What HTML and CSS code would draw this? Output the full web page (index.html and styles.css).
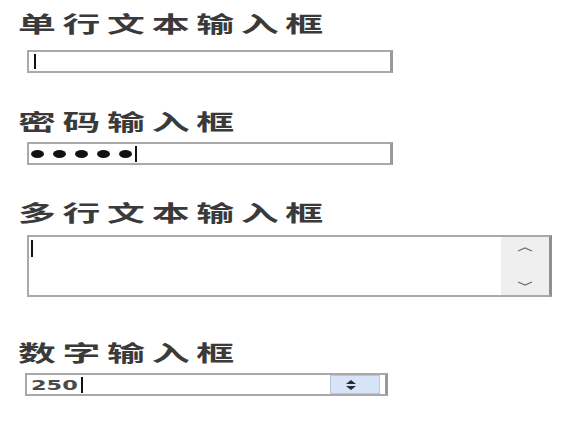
FILE: index.html
```html
<!DOCTYPE html>
<html lang="zh">
<head>
<meta charset="utf-8">
<title>输入框</title>
<link rel="stylesheet" href="styles.css">
</head>
<body>
<main class="page">
  <section class="field field-first">
    <h2 class="label"><span class="stretch">单行文本输入框</span></h2>
    <div class="box single gap-a"><span class="caret caret-single"></span></div>
  </section>

  <section class="field field-second">
    <h2 class="label"><span class="stretch">密码输入框</span></h2>
    <div class="box single password gap-b">
      <span class="dot"></span><span class="dot"></span><span class="dot"></span><span class="dot"></span><span class="dot"></span>
      <span class="caret caret-pass"></span>
    </div>
  </section>

  <section class="field field-third">
    <h2 class="label"><span class="stretch">多行文本输入框</span></h2>
    <div class="box area gap-c">
      <div class="area-text"><span class="caret caret-area"></span></div>
      <div class="scrollbar">
        <svg class="chev" width="22" height="8" viewBox="0 0 22 8"><polyline points="4,6 11,3 18,6" fill="none" stroke="#6f6f6f" stroke-width="1.3"/></svg>
        <svg class="chev" width="22" height="8" viewBox="0 0 22 8"><polyline points="4,2 11,5 18,2" fill="none" stroke="#6f6f6f" stroke-width="1.3"/></svg>
      </div>
    </div>
  </section>

  <section class="field field-fourth">
    <h2 class="label"><span class="stretch">数字输入框</span></h2>
    <div class="box number gap-b">
      <div class="num-text"><span class="num-value">250</span><span class="caret caret-num"></span></div>
      <div class="spin">
        <svg width="12" height="10" viewBox="0 0 12 10"><polygon points="6,0 11,4 1,4" fill="#2b2b2b"/><polygon points="1,6 11,6 6,10" fill="#2b2b2b"/></svg>
      </div>
    </div>
  </section>
</main>
</body>
</html>
```

FILE: styles.css
```css
body {
  margin: 0;
  background: #ffffff;
  font-family: "Noto Sans CJK SC", "Noto Sans", sans-serif;
}

.page {
  padding: 11px 0 0 18px;
}

.field-second { margin-top: 36px; }
.field-third { margin-top: 35px; }
.field-fourth { margin-top: 43px; }

.label {
  margin: 0;
  height: 22px;
  font-size: 22px;
  line-height: 22px;
  font-weight: 700;
  color: #3a3a3a;
  white-space: nowrap;
}

.stretch {
  display: inline-block;
  transform: scaleX(1.72);
  transform-origin: 0 0;
  letter-spacing: 3.9px;
}

.box {
  box-sizing: border-box;
  border: 2px solid #a9a9a9;
  border-right: 3px solid #9a9a9a;
  background: #ffffff;
  margin-left: 9px;
}

.gap-a { margin-top: 17px; }
.gap-b { margin-top: 11px; }
.gap-c { margin-top: 13px; }

.single {
  width: 366px;
  height: 23px;
  display: flex;
  align-items: center;
  padding-left: 5px;
}

.caret {
  display: inline-block;
  width: 2px;
  background: #111111;
}

.caret-single { height: 15px; }

.password {
  padding-left: 2px;
  gap: 9px;
}

.dot {
  width: 13px;
  height: 8px;
  border-radius: 50%;
  background: #111111;
}

.caret-pass {
  height: 16px;
  margin-left: -6px;
}

.area {
  width: 525px;
  height: 62px;
  display: flex;
  border-right-color: #8f8f8f;
}

.area-text {
  flex: 1;
  padding: 1px 0 0 2px;
}

.caret-area { height: 17px; }

.scrollbar {
  width: 48px;
  background: #efefef;
  display: flex;
  flex-direction: column;
  justify-content: space-between;
  align-items: center;
  padding: 8px 0 7px;
}

.chev { display: block; }

.number {
  width: 363px;
  height: 23px;
  margin-left: 7px;
  display: flex;
  align-items: center;
  justify-content: space-between;
  padding: 0 5px 0 4px;
}

.num-text {
  display: flex;
  align-items: center;
}

.num-value {
  display: inline-block;
  width: 50px;
  font-family: "DejaVu Sans", sans-serif;
  font-weight: bold;
  font-size: 14px;
  line-height: 16px;
  color: #4a4a4a;
  transform: scaleX(1.6);
  transform-origin: 0 50%;
}

.caret-num { height: 16px; }

.spin {
  box-sizing: border-box;
  width: 50px;
  height: 19px;
  background: #d7e3f7;
  border: 1px solid #b9c7de;
  display: flex;
  align-items: center;
  justify-content: center;
}

.spin svg { display: block; margin-left: -8px; }
```
